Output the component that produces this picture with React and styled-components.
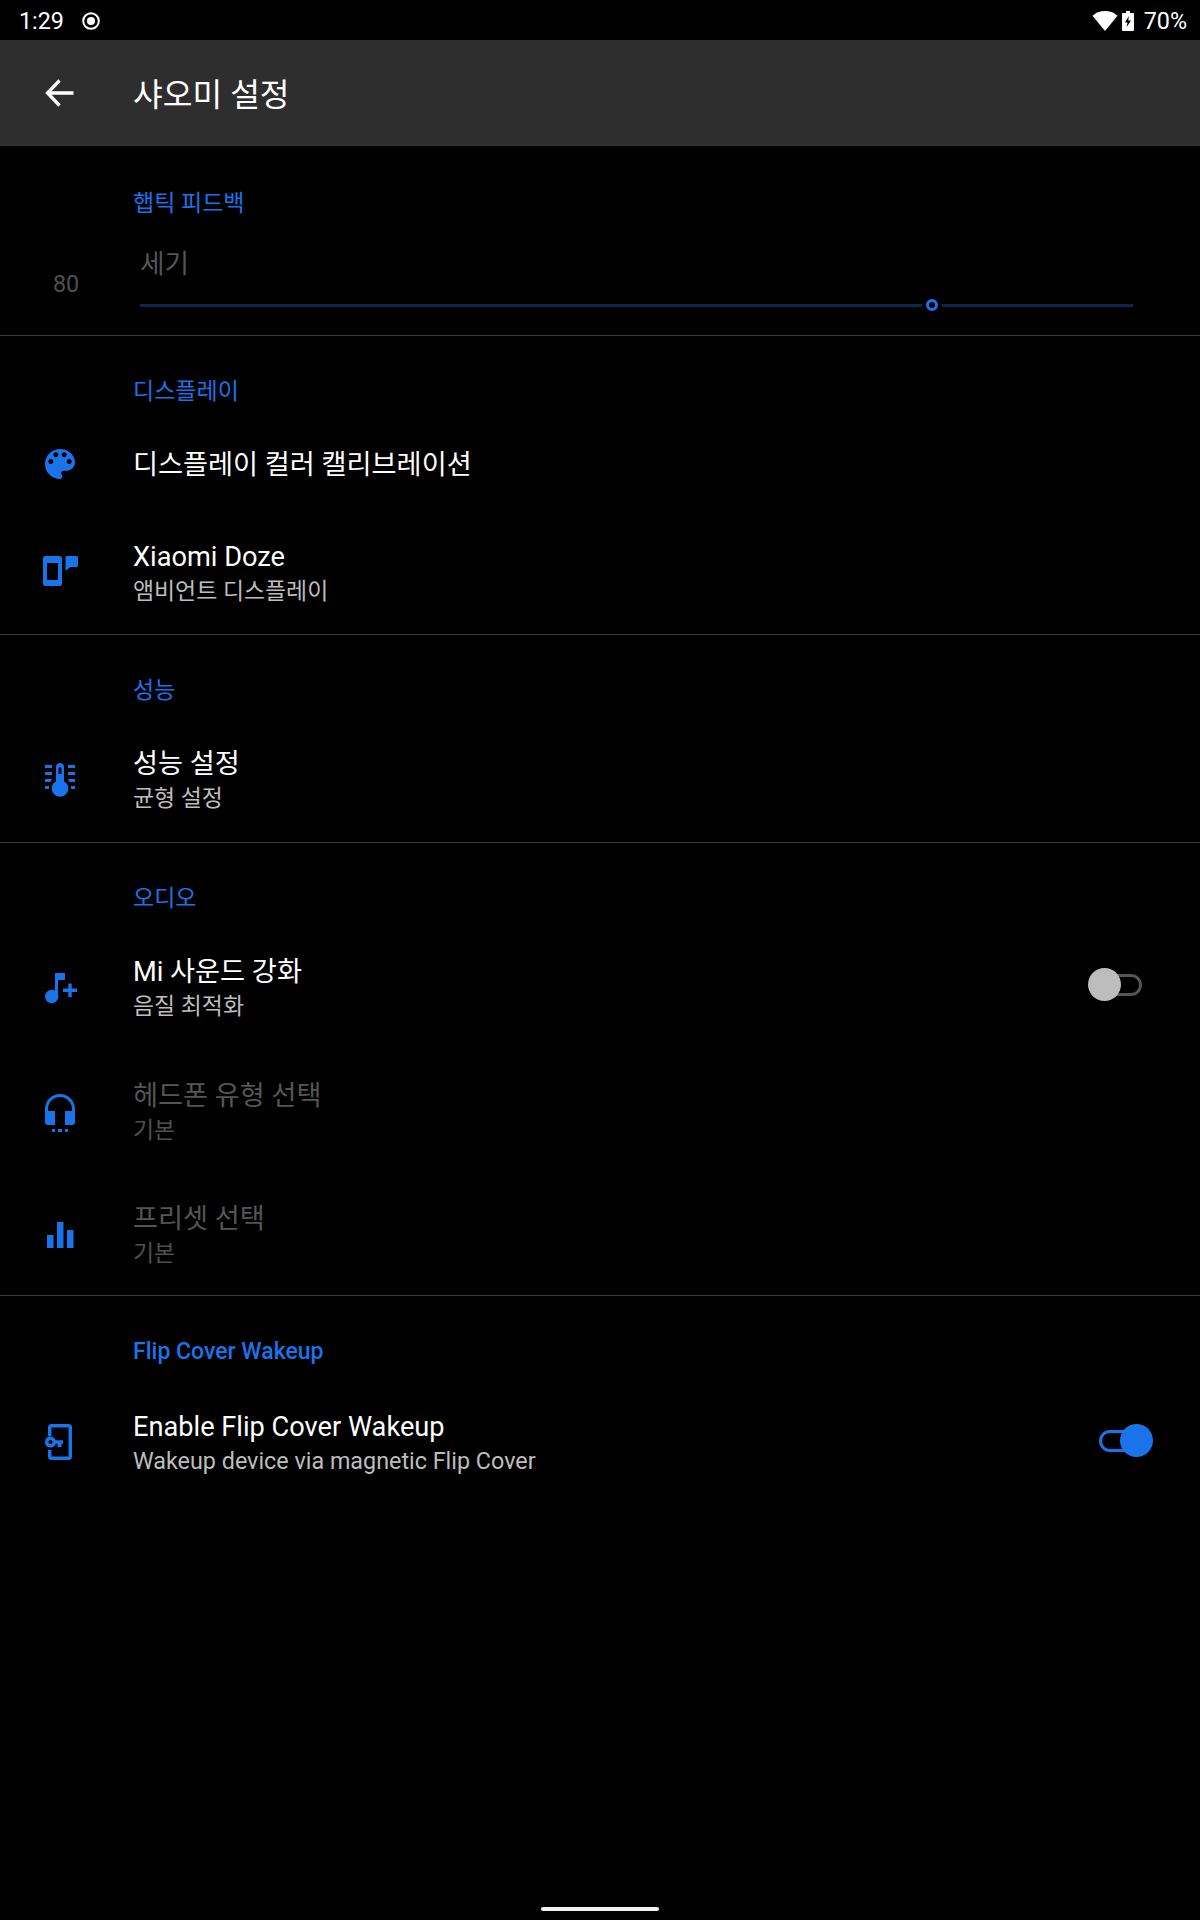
import React from "react";
import styled, { createGlobalStyle } from "styled-components";

const BLUE = "#1a73e8";

const Global = createGlobalStyle`
  html, body { margin: 0; padding: 0; background: #000; }
  body { font-family: Roboto, "Noto Sans CJK KR", sans-serif; }
`;

const Page = styled.div`
  width: 1200px; height: 1920px; background: #000; display: flex; flex-direction: column; overflow: hidden;
`;
const StatusBar = styled.div`
  height: 40px; display: flex; align-items: center; padding: 1px 13px 0 19px; box-sizing: border-box; color: #fff; font-size: 23.33px; flex: none;
`;
const StatusTime = styled.span` width: 62px; `;
const StatusSpacer = styled.div` flex: 1; `;
const StatusPercent = styled.span` margin-left: 10px; `;
const Toolbar = styled.header`
  height: 106px; background: #2e2e2e; display: flex; align-items: center; color: #fff; flex: none;
`;
const BackButton = styled.div` width: 133px; display: flex; justify-content: center; padding-right: 13px; box-sizing: border-box; `;
const ToolbarTitle = styled.h1` margin: 0 0 2px; font-size: 32.3px; font-weight: 400; `;
const Section = styled.section`
  border-bottom: ${p => (p.$last ? "none" : "1px solid #3a3a3a")};
  padding-top: ${p => (p.$first ? 2 : 0)}px;
  flex: none;
`;
const SectionHeader = styled.div`
  color: ${BLUE}; font-size: 23px; line-height: 28px; height: 28px; padding: 42px 0 11px 133px; font-weight: ${p => (p.$medium ? 500 : 400)};
`;
const Row = styled.div`
  display: flex; align-items: center; height: ${p => p.$h || 122}px; padding: ${p => p.$pt || 0}px 47px 0 0; box-sizing: border-box;
`;
const IconCell = styled.div`
  width: 133px; flex: none; display: flex; justify-content: center; padding-right: 13px; box-sizing: border-box;
`;
const RowText = styled.div` flex: 1; display: flex; flex-direction: column; `;
const Title = styled.div`
  font-size: 27.2px; line-height: 35px; color: ${p => (p.$disabled ? "#555" : "#fff")};
`;
const Summary = styled.div`
  font-size: ${p => (p.$latin ? 23.33 : 22.9)}px; line-height: 33px; color: ${p => (p.$disabled ? "#4f4f4f" : "#bdbdbd")};
`;
const SliderRow = styled.div`
  display: flex; align-items: flex-end; height: 116px; padding-right: 67px; margin-top: -10px;
`;
const SliderValue = styled.div`
  width: 140px; flex: none; box-sizing: border-box; padding: 0 0 36px 53px; color: #4f4f4f; font-size: 23.33px; line-height: 30px;
`;
const SliderBody = styled.div` flex: 1; display: flex; flex-direction: column; padding-bottom: 24px; `;
const SliderLabel = styled.div` color: #555; font-size: 26.67px; line-height: 36px; margin-bottom: 17px; `;
const SliderTrack = styled.div` display: flex; align-items: center; height: 12px; gap: 4px; `;
const TrackPart = styled.div` height: 3px; background: #0c2750; flex: ${p => p.$flex}; `;
const SliderThumb = styled.div`
  width: 12px; height: 12px; border: 3px solid ${BLUE}; border-radius: 50%; box-sizing: border-box; flex: none;
`;
const SwitchBox = styled.div`
  position: relative; width: 54px; height: 34px; flex: none; margin: 0 ${p => (p.$on ? 0 : 11)}px 7px 0;
`;
const SwitchTrack = styled.div`
  position: absolute; top: 6px; height: 22px; box-sizing: border-box; border-radius: 11px;
  left: ${p => (p.$on ? "0" : "12px")}; right: ${p => (p.$on ? "12px" : "0")};
  border: 3px solid ${p => (p.$on ? BLUE : "#555")};
`;
const SwitchThumb = styled.div`
  position: absolute; top: 0; width: 33px; height: 33px; border-radius: 50%;
  left: ${p => (p.$on ? "21px" : "0")}; background: ${p => (p.$on ? BLUE : "#bdbdbd")};
`;
const Filler = styled.div` flex: 1; `;
const NavBar = styled.div` height: 13px; flex: none; display: flex; justify-content: center; `;
const NavPill = styled.div` width: 118px; height: 4px; background: #f2f2f2; border-radius: 2px; `;
const Svg = styled.svg` display: block; flex: none; `;

const Icon = ({ children, fill = BLUE, box = "0 0 40 40" }) => (
  <Svg width="40" height="40" viewBox={box} fill={fill}>{children}</Svg>
);

const Palette = () => (
  <Svg width="40" height="40" viewBox="0 0.6 24 24" fill={BLUE}>
    <path d="M12 3c-4.97 0-9 4.03-9 9s4.03 9 9 9c.83 0 1.5-.67 1.5-1.5 0-.39-.15-.74-.39-1.01-.23-.26-.38-.61-.38-.99 0-.83.67-1.5 1.5-1.5H16c2.76 0 5-2.24 5-5 0-4.42-4.03-8-9-8zm-5.5 9c-.83 0-1.5-.67-1.5-1.5S5.67 9 6.5 9 8 9.67 8 10.5 7.33 12 6.5 12zm3-4C8.67 8 8 7.33 8 6.5S8.67 5 9.5 5s1.5.67 1.5 1.5S10.33 8 9.5 8zm5 0c-.83 0-1.5-.67-1.5-1.5S13.67 5 14.5 5s1.5.67 1.5 1.5S15.33 8 14.5 8zm3 4c-.83 0-1.5-.67-1.5-1.5S16.67 9 17.5 9s1.5.67 1.5 1.5-.67 1.5-1.5 1.5z" />
  </Svg>
);
const Doze = () => (
  <Icon box="0 1 40 40">
    <path fillRule="evenodd" d="M5.5 3h14A2.5 2.5 0 0 1 22 5.500v25a2.500 2.500 0 0 1-2.500 2.500h-14A2.500 2.500 0 0 1 3 30.500v-25A2.500 2.500 0 0 1 5.500 3zM7 10v17h11V10z" />
    <path d="M26.500 3H36.500a1.500 1.500 0 0 1 1.500 1.500v8a1.500 1.500 0 0 1-1.500 1.500h-6l-5 4V4.500A1.500 1.500 0 0 1 26.500 3z" />
  </Icon>
);
const Thermo = () => (
  <Icon>
    <path fillRule="evenodd" d="M20 2a4 4 0 0 1 4 4v14.300a8.300 8.300 0 1 1-8 0V6a4 4 0 0 1 4-4zm0 4a1.500 1.500 0 0 0-1.500 1.500V13h3V7.500A1.500 1.500 0 0 0 20 6z" />
    <path d="M5 4h7v3H5zM5 11h7v3H5zM5 18h7l-1.500 3H5zM5 25h4v3H5zM28 4h7v3h-7zM28 11h7v3h-7zM28 18h7v3h-5.500zM31 25h4v3h-4z" />
  </Icon>
);
const Music = () => (
  <Icon>
    <circle cx="11.700" cy="27.500" r="6.700" />
    <path d="M15 4h10v7h-7v16.500h-3z" />
    <path d="M28.300 14.500h3.400v5h5.300v3.400h-5.300v5h-3.400v-5H23v-3.400h5.300z" />
  </Icon>
);
const Headphones = () => (
  <Icon>
    <path d="M5 16C5 7.700 11.700 1 20 1s15 6.700 15 15v13a3 3 0 0 1-3 3h-7V18h7v-2c0-6.600-5.400-12-12-12S8 9.400 8 16v2h7v14H8a3 3 0 0 1-3-3z" />
    <path d="M12 36h3v3h-3zM18 36h4v3h-4zM25 36h3v3h-3z" />
  </Icon>
);
const Bars = () => (
  <Icon>
    <path d="M7 19h6.500v13H7zM17 6h6.500v26H17zM27 14h6.500v18H27z" />
  </Icon>
);
const KeyPhone = () => (
  <Icon box="0 1 40 40">
    <path d="M8 13V4.500A3.500 3.500 0 0 1 11.500 1h17A3.500 3.500 0 0 1 32 4.500v29a3.500 3.500 0 0 1-3.500 3.500h-17A3.500 3.500 0 0 1 8 33.500V27h3.500v6.500h17v-29h-17V13z" />
    <path fillRule="evenodd" d="M10.500 13.500a5.500 5.500 0 0 1 5.200 3.800H23v3.500h-1.500V24h-4v-3.200h-1.800a5.500 5.500 0 1 1-5.200-7.300zm0 3.500a2 2 0 1 0 0 4 2 2 0 0 0 0-4z" />
  </Icon>
);
const Back = () => (
  <Svg width="40" height="40" viewBox="0 0 40 40" fill="none" stroke="#fff" strokeWidth="3.300">
    <path d="M33.500 20H8M19.500 7.500L7.500 20l12 12.500" />
  </Svg>
);
const Record = () => (
  <Svg width="20" height="20" viewBox="0 0 20 20" fill="none">
    <circle cx="10" cy="10" r="7.800" stroke="#fff" strokeWidth="2" />
    <circle cx="10" cy="10" r="4" fill="#fff" />
  </Svg>
);
const Wifi = () => (
  <Svg width="26" height="20" viewBox="0 0 26 20" fill="#fff">
    <path d="M13 0C8 0 3.700 1.800.500 4.800L13 20 25.500 4.800C22.300 1.800 18 0 13 0z" />
  </Svg>
);
const BatteryIcon = styled(Svg)` margin-left: 4px; `;
const Battery = () => (
  <BatteryIcon width="12" height="20" viewBox="0 0 12 20" fill="#fff">
    <path fillRule="evenodd" d="M4 0h4v2h3a1 1 0 0 1 1 1v16a1 1 0 0 1-1 1H1a1 1 0 0 1-1-1V3a1 1 0 0 1 1-1h3zM6.800 5L3 11.500h2.500L4.700 16 9 9.500H6.300z" />
  </BatteryIcon>
);

const Switch = ({ on }) => (
  <SwitchBox $on={on}>
    <SwitchTrack $on={on} />
    <SwitchThumb $on={on} />
  </SwitchBox>
);

const Pref = ({ icon, title, summary, disabled, h, pt, latin, widget }) => (
  <Row $h={h} $pt={pt}>
    <IconCell>{icon}</IconCell>
    <RowText>
      <Title $disabled={disabled}>{title}</Title>
      {summary && <Summary $disabled={disabled} $latin={latin}>{summary}</Summary>}
    </RowText>
    {widget}
  </Row>
);

export default function App() {
  return (
    <Page>
      <Global />
      <StatusBar>
        <StatusTime>1:29</StatusTime>
        <Record />
        <StatusSpacer />
        <Wifi />
        <Battery />
        <StatusPercent>70%</StatusPercent>
      </StatusBar>
      <Toolbar>
        <BackButton><Back /></BackButton>
        <ToolbarTitle>샤오미 설정</ToolbarTitle>
      </Toolbar>
      <Section $first>
        <SectionHeader>햅틱 피드백</SectionHeader>
        <SliderRow>
          <SliderValue>80</SliderValue>
          <SliderBody>
            <SliderLabel>세기</SliderLabel>
            <SliderTrack>
              <TrackPart $flex="0 0 782px" />
              <SliderThumb />
              <TrackPart $flex="1" />
            </SliderTrack>
          </SliderBody>
        </SliderRow>
      </Section>
      <Section>
        <SectionHeader>디스플레이</SectionHeader>
        <Pref h={96} icon={<Palette />} title="디스플레이 컬러 캘리브레이션" />
        <Pref h={121} icon={<Doze />} title="Xiaomi Doze" summary="앰비언트 디스플레이" />
      </Section>
      <Section>
        <SectionHeader>성능</SectionHeader>
        <Pref h={126} pt={3} icon={<Thermo />} title="성능 설정" summary="균형 설정" />
      </Section>
      <Section>
        <SectionHeader>오디오</SectionHeader>
        <Pref h={124} pt={5} icon={<Music />} title="Mi 사운드 강화" summary="음질 최적화" widget={<Switch />} />
        <Pref h={124} pt={6} disabled icon={<Headphones />} title="헤드폰 유형 선택" summary="기본" />
        <Pref h={123} pt={5} disabled icon={<Bars />} title="프리셋 선택" summary="기본" />
      </Section>
      <Section $last>
        <SectionHeader $medium>Flip Cover Wakeup</SectionHeader>
        <Pref pt={12} latin icon={<KeyPhone />} title="Enable Flip Cover Wakeup" summary="Wakeup device via magnetic Flip Cover" widget={<Switch on />} />
      </Section>
      <Filler />
      <NavBar><NavPill /></NavBar>
    </Page>
  );
}
